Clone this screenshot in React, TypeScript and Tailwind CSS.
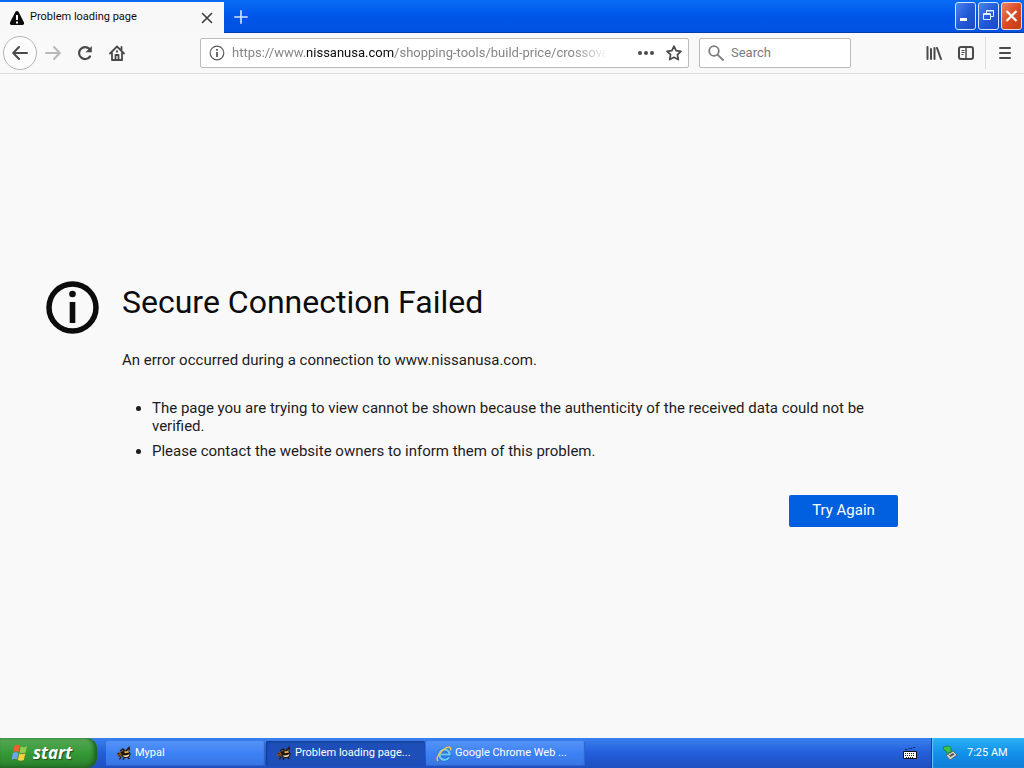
import React from 'react';

const WarningIcon = () => (
  <svg viewBox="0 0 16 16" className="w-4 h-4 shrink-0">
    <path d="M8 1c.8 0 1.300.4 1.700 1.100l5.200 10.200c.6 1.300 0 2.700-1.500 2.700H2.600C1.100 15 .5 13.600 1.100 12.300L6.300 2.100C6.700 1.400 7.200 1 8 1z" fill="#0c0c0d" />
    <path d="M7 5h2v5H7zM7 11.500h2v2H7z" fill="#fff" />
  </svg>
);

const BeeIcon = () => (
  <svg viewBox="0 0 16 16" className="w-4 h-4 shrink-0">
    <path d="M4 5l3-2 3 3M10 5l3-3.500.5 3" fill="#8c6a3c" stroke="#241a0c" strokeWidth="1.400" />
    <path d="M4 6.500c3-2 8-2.500 10 0 1.500 2.500-.5 5.500-4 5.500-3 0-6-2-6-5.500z" fill="#1d160e" />
    <path d="M6.500 9.200c2 .8 4.500.4 7-1.200-.2 2-1.500 3-3.500 3-1.500 0-3-.6-3.500-1.800z" fill="#fff0bf" />
    <path d="M8 5.500l4-.5 1 1.500-4 .8z" fill="#e9b04c" />
    <circle cx="3.300" cy="8.500" r="2.300" fill="#8a5524" />
    <path d="M1.500 7.500h2M2.500 10h2" stroke="#241a0c" strokeWidth="1.200" />
    <path d="M5 11l-1.500 2.500M8 12l-1 2M12 11.500l1.500 1.500" stroke="#1d160e" strokeWidth="1.300" />
  </svg>
);

const ExplorerIcon = () => (
  <svg viewBox="0 0 16 16" className="w-4 h-4 shrink-0">
    <path d="M13 11.200A5.200 5.200 0 1 1 13.700 8.500H4.500" fill="none" stroke="#1668c0" strokeWidth="3.400" />
    <path d="M13 11.200A5.200 5.200 0 1 1 13.700 8.500H4.500" fill="none" stroke="#6fcbfb" strokeWidth="2.200" />
    <path d="M2 15C-1.500 12 8 .5 13.500 1.300c1.500.3 1.400 2 .8 3.200" fill="none" stroke="#f3c34b" strokeWidth="1.500" />
  </svg>
);

const WindowsFlag = () => (
  <svg viewBox="0 0 18 18" className="w-[18px] h-[18px] shrink-0">
    <path d="M3.500 1.500c2-1.200 3.700-1 5.300 0L7.500 8C6 7 4.200 7 2.200 8z" fill="#f0612c" />
    <path d="M9.800 2.500c1.700 1 3.500 1 6.200-.2L14.500 8.500c-2 1-4.300 1-6 0z" fill="#8fd04a" />
    <path d="M2 9c2-1.100 3.700-1 5.300 0L6 15.500C4.500 14.500 2.700 14.500.5 15.500z" fill="#6ba5f5" />
    <path d="M8.300 9.500c1.700 1 4 1 6 0L12.800 16c-2 1.100-4 1.100-6 0z" fill="#fbd13c" />
  </svg>
);

const tasks = [
  { id: 'mypal', label: 'Mypal', icon: BeeIcon, active: false },
  { id: 'problem', label: 'Problem loading page...', icon: BeeIcon, active: true },
  { id: 'chrome', label: 'Google Chrome Web ...', icon: ExplorerIcon, active: false },
];

const TitleBar = () => (
  <header className="flex h-[33px] bg-linear-to-b from-[#0a6cf5] via-[#0055e8] to-[#0053e0] shadow-[inset_0_-1px_0_#003bab]">
    <div className="mt-[2px] w-56 flex items-center bg-[#f8f8f8] pl-[9px] pr-2 text-[11px] text-[#0c0c0d]">
      <WarningIcon />
      <span className="ml-[5px] flex-1 whitespace-nowrap">Problem loading page</span>
      <button aria-label="Close tab" className="w-[18px] h-[18px] flex items-center justify-center">
        <svg viewBox="0 0 12 12" className="w-3 h-3" stroke="#3d3d3f" strokeWidth="1.600" strokeLinecap="round">
          <path d="M1.500 1.500l9 9M10.500 1.500l-9 9" />
        </svg>
      </button>
    </div>
    <button aria-label="New tab" className="w-[34px] flex items-center justify-center">
      <svg viewBox="0 0 14 14" className="w-[14px] h-[14px]" stroke="#d5e6ff" strokeWidth="1.600" strokeLinecap="round">
        <path d="M7 .8v12.400M.8 7h12.400" />
      </svg>
    </button>
    <div className="ml-auto mr-[2px] mt-[2px] flex gap-[2px]">
      <button aria-label="Minimize" className="w-[21px] h-7 rounded-[3px] border border-[#d5e3fb] bg-linear-to-br from-[#4f83ee] via-[#2459d8] to-[#1a48c4]">
        <svg viewBox="0 0 19 26" className="w-full h-full"><path d="M4 15h7v3H4z" fill="#fff" /></svg>
      </button>
      <button aria-label="Restore" className="w-[21px] h-7 rounded-[3px] border border-[#d5e3fb] bg-linear-to-br from-[#4f83ee] via-[#2459d8] to-[#1a48c4]">
        <svg viewBox="0 0 19 26" className="w-full h-full" fill="none" stroke="#e6efff">
          <path d="M7.500 10V7.500h7v6H12M7 8h8" />
          <path d="M4.500 10.500h7v6h-7zM4 11.500h8" />
        </svg>
      </button>
      <button aria-label="Close" className="w-[21px] h-7 rounded-[3px] border border-[#f5d9d2] bg-linear-to-br from-[#ec8262] via-[#dc4a24] to-[#c23a14]">
        <svg viewBox="0 0 19 26" className="w-full h-full" stroke="#fff" strokeWidth="2.200">
          <path d="M4.500 8l10 10M14.500 8l-10 10" />
        </svg>
      </button>
    </div>
  </header>
);

const Toolbar = () => (
  <nav className="flex items-center h-[41px] border-b border-[#dcdcdc] bg-[#f9f9fa] pl-[3px] text-[#4a4a4b]">
    <button aria-label="Back" className="w-[34px] h-[34px] rounded-full border border-[#b5b5b6] bg-[#fcfcfc] flex items-center justify-center">
      <svg viewBox="0 0 16 16" className="w-4 h-4" fill="none" stroke="currentColor" strokeWidth="2" strokeLinecap="round" strokeLinejoin="round">
        <path d="M15 8H1.500M7 2L1.200 8 7 14" />
      </svg>
    </button>
    <button aria-label="Forward" className="w-8 h-8 flex items-center justify-center text-[#b9b9ba]">
      <svg viewBox="0 0 16 16" className="w-4 h-4" fill="none" stroke="currentColor" strokeWidth="2" strokeLinecap="round" strokeLinejoin="round">
        <path d="M1 8h13.500M9 2l5.800 6L9 14" />
      </svg>
    </button>
    <button aria-label="Reload" className="w-8 h-8 flex items-center justify-center">
      <svg viewBox="0 0 16 16" className="w-4 h-4" fill="none" stroke="currentColor" strokeWidth="2.200" strokeLinecap="round">
        <path d="M13 11.500A6 6 0 1 1 12.500 4" />
        <path d="M14.800 1v6.300H8.500z" fill="currentColor" stroke="none" />
      </svg>
    </button>
    <button aria-label="Home" className="w-8 h-8 flex items-center justify-center">
      <svg viewBox="0 0 16 16" className="w-4 h-4" fill="none" stroke="currentColor" strokeWidth="1.800" strokeLinecap="round" strokeLinejoin="round">
        <path d="M1 8.500l7-7 7 7M3 8v7h10V8M12.500 2v3" />
        <path d="M6.500 15v-5h3v5" />
        <path d="M7 5.500h2v2H7z" fill="currentColor" stroke="none" />
      </svg>
    </button>

    <div className="ml-[67px] flex-1 min-w-0 max-w-[489px] h-[30px] flex items-center rounded-[2px] border border-[#bcbcbd] bg-white pl-2">
      <svg viewBox="0 0 16 16" className="w-4 h-4 shrink-0" fill="none" stroke="#5a5a5b">
        <circle cx="8" cy="8" r="6.800" strokeWidth="1.200" />
        <path d="M8 7v5M8 4v1.800" strokeWidth="1.800" />
      </svg>
      <a
        href="#address"
        className="ml-[7px] flex-1 min-w-0 overflow-hidden whitespace-nowrap text-[13px] text-[#858586] mask-[linear-gradient(to_left,transparent,black_36px)]"
      >
        https://www.<span className="text-[#0c0c0d]">nissanusa.com</span>/shopping-tools/build-price/crossove
      </a>
      <button aria-label="Page actions" className="ml-6 w-7 h-7 flex items-center justify-center">
        <svg viewBox="0 0 16 16" className="w-4 h-4" fill="currentColor">
          <circle cx="2" cy="8" r="2" />
          <circle cx="8" cy="8" r="2" />
          <circle cx="14" cy="8" r="2" />
        </svg>
      </button>
      <button aria-label="Bookmark this page" className="w-7 h-7 flex items-center justify-center">
        <svg viewBox="0 0 16 16" className="w-4 h-4" fill="none" stroke="currentColor" strokeWidth="1.700" strokeLinejoin="round">
          <path d="M8 1.200l2.100 4.400 4.900.7-3.600 3.400.9 4.900L8 12.300l-4.300 2.300.9-4.900L1 6.300l4.900-.7z" />
        </svg>
      </button>
    </div>

    <label className="ml-[10px] w-[152px] h-[30px] flex items-center rounded-[2px] border border-[#bcbcbd] bg-white pl-2">
      <svg viewBox="0 0 16 16" className="w-4 h-4 shrink-0" fill="none" stroke="#7d7d7e" strokeWidth="1.800" strokeLinecap="round">
        <circle cx="6" cy="6" r="4.800" />
        <path d="M9.800 9.800L15 15" />
      </svg>
      <input type="text" aria-label="Search" placeholder="Search" className="ml-[7px] w-full min-w-0 bg-transparent text-[13px] outline-none placeholder:text-[#7b7b7c]" />
    </label>

    <div className="ml-auto flex items-center">
      <button aria-label="Library" className="w-8 h-8 flex items-center justify-center">
        <svg viewBox="0 0 16 16" className="w-4 h-4" fill="none" stroke="currentColor" strokeWidth="2" strokeLinecap="round">
          <path d="M1.500 2v12M5 4v10M8.500 3v11M11 3l4 11" />
        </svg>
      </button>
      <button aria-label="Sidebars" className="w-8 h-8 flex items-center justify-center">
        <svg viewBox="0 0 16 16" className="w-4 h-4" fill="none" stroke="currentColor">
          <rect x="1" y="2" width="14" height="12" rx="2" strokeWidth="2" />
          <path d="M8 2v12" strokeWidth="1.500" />
          <path d="M3.500 5.500h3M3.500 7.500h3M3.500 9.500h2" strokeWidth="1" />
        </svg>
      </button>
      <div className="ml-[3px] h-8 w-px bg-[#dededf]" />
      <button aria-label="Open menu" className="w-[38px] h-8 flex items-center justify-center">
        <svg viewBox="0 0 16 16" className="w-4 h-4" stroke="currentColor" strokeWidth="2" strokeLinecap="round">
          <path d="M3 3h10M3 8h10M3 13h10" />
        </svg>
      </button>
    </div>
  </nav>
);

const ErrorPage = () => (
  <main className="flex-1 flex items-center justify-center bg-[#f9f9fa] pl-[46px] pr-[126px] pb-[5px] text-[#1c1c1d]">
    <div className="w-full max-w-[852px] flex items-start">
      <svg viewBox="0 0 54 54" className="w-[54px] h-[54px] shrink-0 mr-[22px]">
        <circle cx="26.500" cy="26.500" r="23.500" fill="none" stroke="#0c0c0d" strokeWidth="5.500" />
        <circle cx="26.500" cy="13" r="3.300" fill="#0c0c0d" />
        <path d="M23.700 21h5.600v21h-5.600z" fill="#0c0c0d" />
      </svg>
      <div className="flex-1 min-w-0">
        <h1 className="text-[32px] leading-[42px] text-[#0c0c0d]">Secure Connection Failed</h1>
        <p className="mt-7 text-[15px] leading-[18px]">An error occurred during a connection to www.nissanusa.com.</p>
        <ul className="mt-[30px] pl-[30px] list-disc text-[15px] leading-[18px] space-y-[7px]">
          <li>The page you are trying to view cannot be shown because the authenticity of the received data could not be verified.</li>
          <li>Please contact the website owners to inform them of this problem.</li>
        </ul>
        <div className="mt-[35px] flex justify-end">
          <button className="w-[109px] h-8 rounded-[2px] bg-[#0060df] text-[15px] text-white">Try Again</button>
        </div>
      </div>
    </div>
  </main>
);

const Taskbar = () => (
  <footer className="flex h-[30px] bg-linear-to-b from-[#3a80ee] via-[#245edb] to-[#1e4fc0] text-[11px] text-white">
    <button className="w-[97px] flex items-center gap-1 rounded-r-[10px] bg-linear-to-b from-[#58a758] via-[#359a36] to-[#2b7f2d] pl-[11px] shadow-[inset_-3px_-1px_4px_#1d5f20]">
      <WindowsFlag />
      <span className="font-['Open_Sans','Noto_Sans',sans-serif] text-[17px] leading-5 font-bold italic [text-shadow:1px_1px_1px_#1d4d1d]">start</span>
    </button>
    <div className="ml-[9px] flex gap-px pt-[3px] pb-[2px]">
      {tasks.map((task) => {
        const Icon = task.icon;
        return (
          <button
            key={task.id}
            className={`w-[159px] flex items-center gap-[3px] rounded-[2px] pl-[10px] whitespace-nowrap ${
              task.active
                ? 'bg-[#1e4fb9] shadow-[inset_1px_1px_2px_#12398e]'
                : 'bg-linear-to-b from-[#5592f7] via-[#3c81f3] to-[#3876e4] shadow-[inset_-1px_-1px_1px_#2f62cc]'
            }`}
          >
            <Icon />
            <span>{task.label}</span>
          </button>
        );
      })}
    </div>
    <button aria-label="Keyboard" className="ml-auto mr-[14px] flex items-center">
      <svg viewBox="0 0 14 14" className="w-[14px] h-[14px]">
        <path d="M2 3.500h3l1-1h3l1-1h2" fill="none" stroke="#10245e" strokeDasharray="2 1" />
        <path d="M.5 5.500h13v7H.5z" fill="#fff" stroke="#111" />
        <path d="M2 7.500h10M2 9.500h10M3 11.500h8" stroke="#222" strokeDasharray="1 1" />
      </svg>
    </button>
    <div className="w-[93px] flex items-center border-l border-[#0b3fa8] bg-linear-to-b from-[#2bb2f5] via-[#1290ea] to-[#0f7dd6] pl-[10px] shadow-[inset_1px_0_1px_#5fd0ff]">
      <svg viewBox="0 0 16 16" className="w-4 h-4 shrink-0">
        <path d="M4 10l7-4 4 4-7 5z" fill="#d8d8d8" stroke="#555" strokeWidth=".8" />
        <path d="M7 10.500l4-2.500 1.500 1.500-4 2.500z" fill="#555" />
        <path d="M1 2l6-1 2 2v5L7 7l-1 3-2-4-2-1z" fill="#3fc44b" stroke="#176b22" strokeWidth=".6" />
      </svg>
      <time className="ml-[9px] whitespace-nowrap">7:25 AM</time>
    </div>
  </footer>
);

const App: React.FC = () => {
  return (
    <div className="min-h-screen flex flex-col font-[Roboto,'Noto_Sans',sans-serif]">
      <TitleBar />
      <Toolbar />
      <ErrorPage />
      <Taskbar />
    </div>
  );
};

export default App;
